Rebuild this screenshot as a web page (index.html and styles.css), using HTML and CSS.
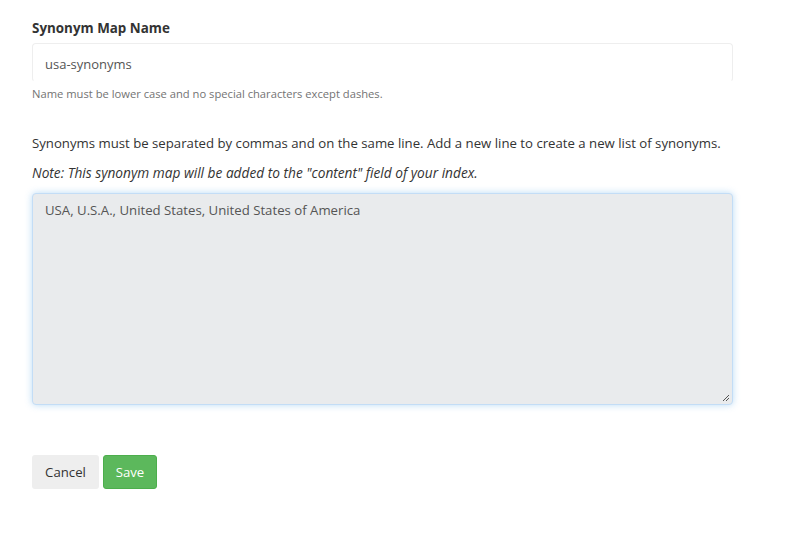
FILE: index.html
```html
<!DOCTYPE html>
<html>
<head>
<meta charset="utf-8">
<link rel="stylesheet" href="styles.css">
</head>
<body>
<div class="form">
  <div class="group">
    <label class="label">Synonym Map Name</label>
    <div class="input">usa-synonyms</div>
    <div class="help">Name must be lower case and no special characters except dashes.</div>
  </div>
  <p class="desc">Synonyms must be separated by commas and on the same line. Add a new line to create a new list of synonyms.</p>
  <p class="note">Note: This synonym map will be added to the "content" field of your index.</p>
  <div class="textarea">
    <span>USA, U.S.A., United States, United States of America</span>
    <svg class="grip" width="8" height="8" viewBox="0 0 8 8"><path d="M7 1 L1 7 M7 4 L4 7" stroke="#555" stroke-width="1"/></svg>
  </div>
  <div class="actions">
    <button class="btn btn-cancel">Cancel</button>
    <button class="btn btn-save">Save</button>
  </div>
</div>
</body>
</html>
```
FILE: styles.css
```css
html, body { margin: 0; padding: 0; background: #fff; }
body { font-family: "Open Sans", "Noto Sans", sans-serif; color: #333; font-size: 13px; }
.form { padding: 18px 0 0 32px; width: 701px; }
.label { display: block; font-weight: 700; font-size: 13.4px; line-height: 20px; color: #333; }
.input { margin-top: 5px; height: 39px; box-sizing: border-box; border: 1px solid #eee; border-bottom-color: #fff; border-radius: 4px; padding: 10px 12px 0 12px; font-size: 13px; color: #555; line-height: 20px; }
.help { font-size: 11.2px; color: #737373; margin-top: 4px; line-height: 16px; }
.desc { margin: 31px 0 0 0; font-size: 13.2px; line-height: 20px; white-space: nowrap; }
.note { margin: 10px 0 0 0; font-size: 13.7px; line-height: 20px; font-style: italic; }
.textarea { position: relative; margin-top: 10px; width: 701px; height: 212px; box-sizing: border-box; background: #e9ebed; border: 1px solid #c3ddf6; border-radius: 4px; box-shadow: 0 0 7px rgba(102,175,233,0.45); padding: 6px 12px; font-size: 13.2px; color: #555; line-height: 20px; }
.grip { position: absolute; right: 2px; bottom: 2px; }
.actions { margin-top: 50px; display: flex; gap: 4px; }
.btn { font-family: inherit; font-size: 13.2px; height: 34px; border-radius: 3px; padding: 0 10px; border: 1px solid transparent; cursor: pointer; }
.btn-cancel { background: #eee; color: #333; width: 67px; }
.btn-save { background: #5cb85c; border-color: #4cae4c; color: #fff; width: 54px; }
```
